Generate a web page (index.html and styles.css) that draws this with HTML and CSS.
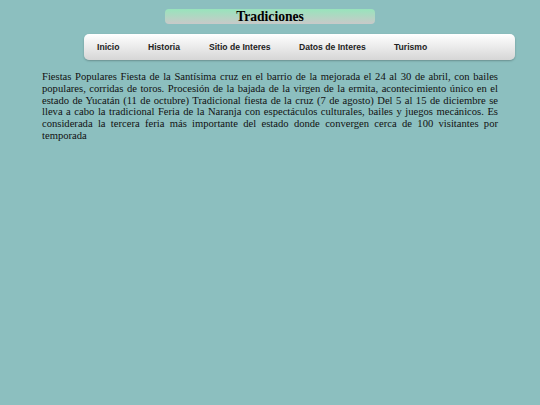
FILE: index.html
```html
<!DOCTYPE html>
<html>
<head>
<meta charset="utf-8">
<link rel="stylesheet" href="styles.css">
</head>
<body>
<header class="title">Tradiciones</header>
<nav class="menu">
  <a href="#">Inicio</a>
  <a href="#">Historia</a>
  <a href="#">Sitio de Interes</a>
  <a href="#">Datos de Interes</a>
  <a href="#">Turismo</a>
</nav>
<p class="text">Fiestas Populares Fiesta de la Santísima cruz en el barrio de la mejorada el 24 al 30 de abril, con bailes populares, corridas de toros. Procesión de la bajada de la virgen de la ermita, acontecimiento único en el estado de Yucatán (11 de octubre) Tradicional fiesta de la cruz (7 de agosto) Del 5 al 15 de diciembre se lleva a cabo la tradicional Feria de la Naranja con espectáculos culturales, bailes y juegos mecánicos. Es considerada la tercera feria más importante del estado donde convergen cerca de 100 visitantes por temporada</p>
</body>
</html>
```
FILE: styles.css
```css
html, body {
  margin: 0;
  padding: 0;
}
body {
  background: #8cbfbf;
  width: 540px;
  height: 405px;
  padding-top: 9px;
  box-sizing: border-box;
}
.title {
  width: 210px;
  height: 15px;
  margin: 0 auto;
  background: linear-gradient(to bottom, #98e4bc, #c9c9c9);
  border-radius: 4px;
  text-align: center;
  font-family: "Liberation Serif", serif;
  font-weight: bold;
  font-size: 13.6px;
  line-height: 15px;
  color: #000;
}
.menu {
  margin: 10px 25px 0 84px;
  height: 26px;
  background: linear-gradient(to bottom, #ffffff, #d6d6d6);
  border-radius: 5px;
  box-shadow: 0 1px 2px rgba(0,0,0,0.25);
  display: flex;
  align-items: center;
  padding-left: 13px;
}
.menu a {
  font-family: "Liberation Sans", Arial, sans-serif;
  font-weight: bold;
  font-size: 8.6px;
  color: #222;
  text-decoration: none;
}
.menu a:nth-child(1) { width: 51px; }
.menu a:nth-child(2) { width: 61px; }
.menu a:nth-child(3) { width: 90px; }
.menu a:nth-child(4) { width: 95px; }
.text {
  margin: 11px 42px 0 42px;
  font-family: "Liberation Serif", serif;
  font-size: 10.6px;
  line-height: 11.8px;
  text-align: justify;
  color: #111;
}
```
